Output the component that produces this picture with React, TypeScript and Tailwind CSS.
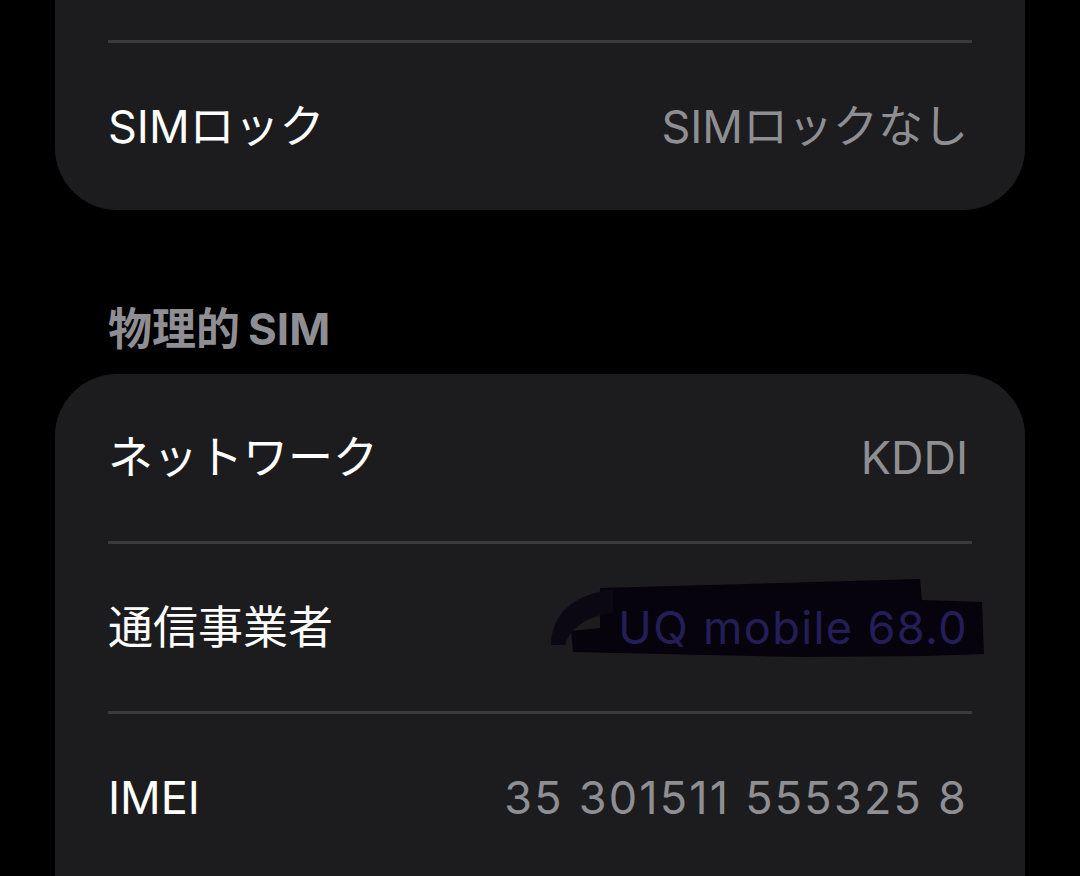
import React from 'react';

const Separator: React.FC = () => <div className="mx-[53px] h-[3px] bg-[#3a3a3c]" />;

const Row: React.FC<{ label: string; value?: React.ReactNode }> = ({ label, value }) => (
  <div className="relative flex h-[167px] items-center justify-between pl-[53px] pr-[57px]">
    <span className="text-white">{label}</span>
    {value}
  </div>
);

// Redacted value with marker scribble over it
const RedactedValue: React.FC = () => (
  <>
    <svg
      className="pointer-events-none absolute inset-0 h-full w-full"
      viewBox="0 545 970 167"
      preserveAspectRatio="none"
    >
      <path
        d="M 545 589 L 725 584 L 865 580 L 867 601 L 927 603 L 929 655 L 870 657 L 745 658 L 518 653 L 516 632 L 545 629 Z"
        fill="#06030d"
      />
      <path
        d="M 496 646 C 497 614, 518 596, 558 590 L 558 614 C 532 617, 516 628, 510 646 Z"
        fill="#0b0814"
      />
    </svg>
    <span className="relative tracking-[1.4px] text-[#241e58]">UQ mobile 68.0</span>
  </>
);

export default function App() {
  return (
    <div className="h-[876px] overflow-hidden bg-black font-['Inter','Noto_Sans_CJK_JP',sans-serif] text-[45px] leading-[54px]">
      <div className="px-[55px]">
        {/* SIM lock card (top cut off) */}
        <div className="-mt-[127px] overflow-hidden rounded-[62px] bg-[#1c1c1e]">
          <Row label="" />
          <Separator />
          <Row label="SIMロック" value={<span className="text-[#8e8e93]">SIMロックなし</span>} />
        </div>

        {/* Section header */}
        <div className="flex h-[164px] items-end pb-[19px] pl-[53px]">
          <h2 className="text-[44px] font-bold leading-[52px] text-[#8e8e93]">
            物理的<span className="ml-[8px]">SIM</span>
          </h2>
        </div>

        {/* Physical SIM card */}
        <div className="overflow-hidden rounded-t-[62px] bg-[#1c1c1e] pb-[40px]">
          <Row label="ネットワーク" value={<span className="text-[#8e8e93]">KDDI</span>} />
          <Separator />
          <Row label="通信事業者" value={<RedactedValue />} />
          <Separator />
          <Row
            label="IMEI"
            value={<span className="tracking-[2.2px] text-[#8e8e93]">35 301511 555325 8</span>}
          />
        </div>
      </div>
    </div>
  );
}
